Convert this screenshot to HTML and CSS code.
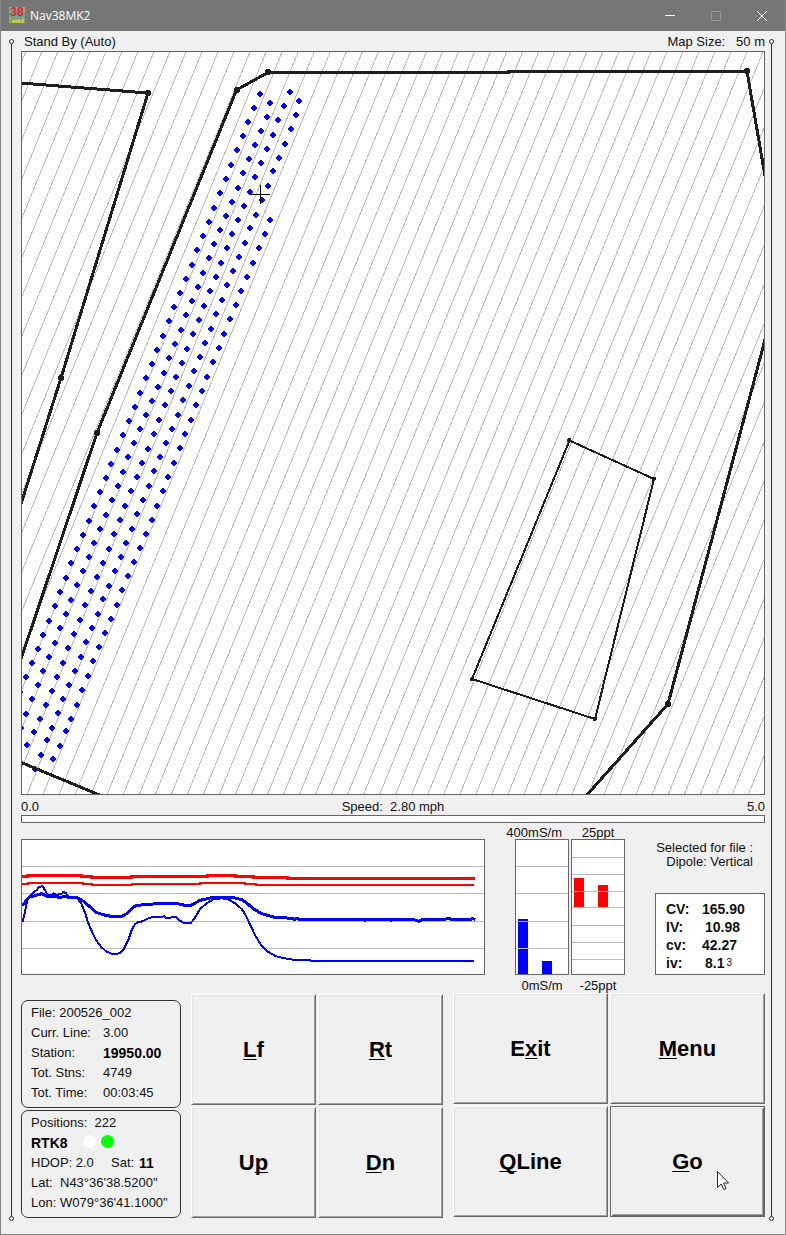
FILE: index.html
```html
<!DOCTYPE html>
<html lang="en">
<head>
<meta charset="utf-8">
<title>Nav38MK2</title>
<link rel="stylesheet" href="styles.css">
</head>
<body>
<div class="window">
  <header class="titlebar">
    <svg class="app-icon" viewBox="0 0 16 16" aria-hidden="true">
      <rect width="16" height="16" fill="#7d9c82"/>
      <path d="M0 1h5M7 1h3M12 1h4M0 4h2M14 4h2M1 10v6M14 6v5M3 15h3" stroke="#c8c23a" stroke-width="1"/>
      <path d="M0 7h3M8 2v3M5 0v2M0 13h3M9 9h6M12 3h3" stroke="#3fa3a8" stroke-width="1"/>
      <text x="8" y="9" class="icon-38">38</text>
      <text x="9" y="16" class="icon-mk">mk2</text>
    </svg>
    <h1 class="title">Nav38MK2</h1>
    <button class="win-btn" type="button" aria-label="Minimize"><svg viewBox="0 0 10 10"><path d="M0 4.500h10"/></svg></button>
    <button class="win-btn" type="button" aria-label="Maximize" disabled><svg viewBox="0 0 10 10"><path d="M.5.5h9v9h-9z"/></svg></button>
    <button class="win-btn" type="button" aria-label="Close"><svg viewBox="0 0 10 10"><path class="smooth" d="M0 0l10 10M10 0L0 10"/></svg></button>
  </header>

  <div class="client">
    <div class="rail rail-left"><i class="knob"></i><i class="track"></i><i class="knob"></i></div>

    <main class="content">
      <div class="map-head"><span>Stand By (Auto)</span><span>Map Size: &nbsp;&nbsp;50 m</span></div>

      <svg class="map" viewBox="22 52 742 742" role="img" aria-label="Survey map">
        <defs>
          <path id="swaths" d="M25.6 52l-303 742m319.03-742l-303 742m319.03-742l-303 742m319.03-742l-303 742m319.03-742l-303 742m319.03-742l-303 742m319.03-742l-303 742m319.03-742l-303 742m319.03-742l-303 742m319.03-742l-303 742m319.03-742l-303 742"/>
        </defs>
        <g class="swath-lines">
          <use href="#swaths"/><use href="#swaths" x="176.33"/><use href="#swaths" x="352.66"/>
          <use href="#swaths" x="528.99"/><use href="#swaths" x="705.32"/><use href="#swaths" x="881.65"/>
        </g>
        <g class="stations">
          <path d="M260 94h0M254 108h0M248 122h0M243 136h0M237 150h0M231 165h0M226 179h0M220 193h0M214 208h0M209 222h0M203 236h0M197 250h0M192 265h0M186 279h0M180 293h0M174 307h0M169 321h0M163 336h0M157 350h0M152 364h0M146 378h0M140 393h0M135 407h0M129 421h0M123 435h0M117 450h0M111 464h0M106 478h0M100 492h0M94 506h0M89 521h0M83 535h0M77 549h0M71 563h0M66 578h0M60 592h0M55 606h0M49 621h0M43 635h0M38 649h0M32 663h0M26 677h0M20 692h0"/>
          <path d="M270 103h0M267 117h0M261 131h0M255 145h0M249 159h0M243 173h0M238 188h0M232 202h0M226 216h0M220 230h0M214 244h0M209 258h0M203 273h0M198 287h0M192 301h0M186 315h0M181 330h0M175 344h0M169 358h0M164 373h0M158 387h0M152 401h0M146 415h0M140 429h0M134 443h0M128 457h0M123 472h0M118 486h0M112 500h0M106 515h0M100 529h0M94 543h0M89 557h0M83 571h0M77 585h0M71 600h0M66 614h0M60 628h0M55 643h0M49 657h0M43 671h0M38 685h0M32 699h0M26 714h0M21 728h0"/>
          <path d="M290 92h0M284 106h0M278 120h0M273 135h0M267 149h0M261 163h0M255 177h0M250 192h0M244 206h0M238 220h0M232 234h0M227 248h0M221 263h0M216 277h0M210 291h0M204 306h0M199 320h0M193 334h0M187 349h0M182 363h0M176 377h0M171 391h0M165 405h0M159 420h0M154 434h0M148 449h0M142 463h0M137 477h0M131 491h0M125 506h0M120 520h0M114 534h0M109 549h0M103 563h0M97 577h0M91 591h0M85 605h0M80 620h0M74 634h0M68 648h0M63 663h0M57 677h0M52 691h0M46 705h0M40 719h0M34 732h0M27 745h0"/>
          <path d="M299 101h0M296 115h0M291 129h0M285 144h0M279 158h0M273 171h0M268 186h0M262 200h0M256 215h0M250 228h0M245 243h0M239 257h0M233 271h0M227 285h0M222 300h0M216 314h0M211 329h0M205 343h0M200 357h0M194 371h0M189 386h0M183 400h0M178 415h0M172 429h0M166 443h0M160 457h0M154 471h0M149 486h0M143 500h0M137 514h0M132 529h0M126 543h0M121 557h0M115 571h0M109 586h0M103 599h0M98 614h0M92 628h0M86 642h0M81 657h0M75 671h0M69 685h0M63 699h0M58 713h0M52 728h0M47 740h0M41 755h0"/>
          <path d="M270 220h0M265 234h0M259 248h0M253 263h0M247 277h0M241 291h0M236 305h0M230 319h0M224 334h0M219 348h0M213 362h0M207 377h0M202 391h0M196 405h0M191 420h0M185 434h0M180 448h0M174 463h0M168 477h0M163 491h0M157 506h0M152 520h0M146 534h0M140 548h0M134 562h0M128 576h0M122 590h0M117 605h0M111 619h0M105 633h0M99 647h0M93 661h0M88 676h0M82 690h0M77 705h0M71 719h0M66 731h0M60 746h0M53 759h0M35 769h0"/>
        </g>
        <g class="boundary">
          <path d="M20 83L148 93L61 378L20 507"/>
          <path d="M20 662L97 433L236.500 90L268 72.500H508V71.500H747L765 176"/>
          <path d="M766 336L668 704L586 796"/>
          <path d="M20 762L102 796"/>
        </g>
        <path class="nodes" d="M148 93h0M61 378h0M97 433h0M237 90h0M268 72h0M747 71h0M668 704h0"/>
        <path class="plot" d="M569.500 440.500L654 479L595 719L472 679z"/>
        <path class="plot-nodes" d="M569 440h0M654 479h0M595 719h0M472 679h0"/>
        <path class="cross" d="M260.500 185v19M251 194.500h19"/>
      </svg>

      <div class="speed"><span>0.0</span><label for="speed">Speed: &nbsp;2.80 mph</label><span>5.0</span></div>
      <progress class="speed-bar" id="speed" value="0" max="5"></progress>

      <section class="readings">
        <svg class="chart" viewBox="66 150 1386 402" preserveAspectRatio="none" role="img" aria-label="Readings trace">
          <path class="grid" d="M66 229.500h1386M66 310.500h1386M66 394.500h1386M66 475.500h1386"/>
          <path class="red thick" d="M66 259.500H82V256.500H245V259.500H275V262.500H395V259.500H622V256.500H707V259.500H760V262.500H863V265.500H1426"/>
          <path class="red thin" d="M66 282H85V279H248V282H277V285H397V282H601V279H734V282H769V285H1423"/>
          <path class="blue thick" d="M66 348L87 322L105 317L125 311L140 319L160 320L180 322L195 320L210 322L235 324L252 335L290 368L320 377L345 380L365 379L382 370L400 351L410 346L450 343L490 339L505 341L525 339L545 344L560 347L575 345L600 331L635 323L700 323L725 329L740 339L760 356L785 371L820 381L875 385L884 388L890 385L898 388H1090L1095 391L1100 388H1168L1173 391L1178 388H1240L1256 394L1268 388H1335L1345 385L1355 388H1412L1418 385L1426 389"/>
          <path class="blue thin" d="M68 395L75 365L82 330L97 310L110 300L118 290L128 289L135 300L142 315L155 315L160 310L168 314L184 313L190 306L197 309L205 320L232 325L245 343L255 368L265 400L278 430L290 453L303 470L318 484L335 491L350 492L362 488L372 476L385 450L395 420L405 402L415 396L428 394L440 387L455 382L487 381L491 378L497 383L510 384L515 381L527 381L540 392L552 399L572 399L582 388L600 357L620 340L640 328L665 325L685 328L705 340L725 357L735 372L750 403L765 435L785 468L800 483L828 499L860 506L885 510L930 511L935 513H1423"/>
        </svg>

        <div class="gauges">
          <div class="gauge">
            <span class="gauge-top wide">400mS/m</span>
            <svg class="gauge-box" viewBox="0 0 52 134" preserveAspectRatio="none" role="img" aria-label="Conductivity">
              <path fill="#00f" d="M2 79h10v55H2zM26 121h10v13H26z"/>
              <path class="rule" d="M0 26.500h52M0 53.500h52M0 81.500h52M0 108.500h52"/>
            </svg>
            <span class="gauge-bottom">0mS/m</span>
          </div>
          <div class="gauge">
            <span class="gauge-top">25ppt</span>
            <svg class="gauge-box" viewBox="0 0 52 134" preserveAspectRatio="none" role="img" aria-label="In-phase">
              <path fill="#f00" d="M2 38h10v29H2zM26 45h10v22H26z"/>
              <path class="rule" d="M0 17.500h52M0 34.500h52M0 51.500h52M0 67.500h52M0 85.500h52M0 102.500h52M0 119.500h52"/>
            </svg>
            <span class="gauge-bottom">-25ppt</span>
          </div>
        </div>

        <div class="side">
          <p class="selected">Selected for file :<br>Dipole: Vertical</p>
          <dl class="values">
            <dt>CV:</dt><dd>165.90</dd>
            <dt>IV:</dt><dd class="indent">10.98</dd>
            <dt>cv:</dt><dd>42.27</dd>
            <dt>iv:</dt><dd class="indent">8.1<span class="residue">3</span></dd>
          </dl>
        </div>
      </section>

      <section class="bottom">
        <div class="panels">
          <div class="panel">
            <p>File: 200526_002</p>
            <p><span class="key">Curr. Line:</span>3.00</p>
            <p><span class="key">Station:</span><b>19950.00</b></p>
            <p><span class="key">Tot. Stns:</span>4749</p>
            <p><span class="key">Tot. Time:</span>00:03:45</p>
          </div>
          <div class="panel">
            <p>Positions: &nbsp;222</p>
            <p><b class="fix">RTK8</b><i class="lamp"></i><i class="lamp on"></i></p>
            <p><span class="hdop">HDOP: 2.0</span><span class="sat">Sat:</span><b>11</b></p>
            <p><span class="axis">Lat:</span>N43°36'38.5200"</p>
            <p><span class="axis">Lon:</span>W079°36'41.1000"</p>
          </div>
        </div>
        <div class="keys">
          <button class="key-btn" type="button"><span><u>L</u>f</span></button>
          <button class="key-btn" type="button"><span><u>R</u>t</span></button>
          <button class="key-btn" type="button"><span>U<u>p</u></span></button>
          <button class="key-btn" type="button"><span><u>D</u>n</span></button>
        </div>
        <div class="keys actions">
          <button class="key-btn" type="button"><span>E<u>x</u>it</span></button>
          <button class="key-btn" type="button"><span><u>M</u>enu</span></button>
          <button class="key-btn" type="button"><span><u>Q</u>Line</span></button>
          <button class="key-btn default" type="button"><span><u>G</u>o</span>
            <svg class="cursor" viewBox="0 0 12 19" aria-hidden="true"><path d="M.5.500v16l3.700-3.500 2.500 5.500 2.300-1-2.400-5.500h5z" fill="#fff" stroke="#223" stroke-width="1"/></svg>
          </button>
        </div>
      </section>
    </main>

    <div class="rail rail-right"><i class="knob"></i><i class="track"></i><i class="knob"></i></div>
  </div>
</div>
</body>
</html>
```
FILE: styles.css
```css
* { box-sizing: border-box; }

body {
  margin: 0;
  background: #f0f0f0;
  color: #111;
  font: 13px/20px "Liberation Sans", Arial, sans-serif;
}

p, dl, dd, h1 { margin: 0; }

.window {
  display: flex;
  flex-direction: column;
  min-height: 100vh;
  border: 1px solid #868686;
  border-top: 0;
}

.titlebar {
  display: flex;
  align-items: center;
  height: 31px;
  padding-left: 8px;
  background: #767676;
  color: #fff;
}

.app-icon { width: 16px; height: 16px; margin-bottom: 2px; overflow: visible; }
.icon-38 { font: bold 12px "Liberation Sans", sans-serif; fill: #e0243c; text-anchor: middle; }
.icon-mk { font: bold 6px "Liberation Sans", sans-serif; fill: #f0e818; text-anchor: middle; }

.title {
  flex: 1;
  padding-left: 5px;
  font: 12px/20px "Open Sans", "Noto Sans", sans-serif;
}

.win-btn {
  display: flex;
  align-items: center;
  justify-content: center;
  width: 46px;
  height: 31px;
  padding: 0;
  border: 0;
  background: none;
}
.win-btn svg { width: 10px; height: 10px; overflow: visible; }
.win-btn path { fill: none; stroke: #fff; shape-rendering: crispEdges; }
.win-btn path.smooth { shape-rendering: auto; }
.win-btn:disabled path { stroke: #949494; }

.client { display: flex; flex: 1; }

.rail {
  display: flex;
  flex-direction: column;
  align-items: center;
  flex: none;
  width: 20px;
  padding: 8px 0 13px;
}
.rail-left { padding-left: 8px; padding-right: 7px; }
.rail-right { padding-left: 4px; padding-right: 11px; }
.knob { width: 5px; height: 5px; border: 1px solid #222; border-radius: 50%; background: #fff; }
.track { flex: 1; width: 1px; background: #333; }

.content { flex: 1; min-width: 0; padding-bottom: 16px; }

.map-head { display: flex; justify-content: space-between; padding: 2px 0 0 3px; line-height: 18px; }

.map {
  display: block;
  width: 100%;
  border: 1px solid #646464;
  background: #fff;
  shape-rendering: crispEdges;
}
.map path { fill: none; }
.swath-lines { stroke: #bdbdbd; stroke-width: 1; }
.stations { stroke: #00f; stroke-width: 5.6; stroke-linecap: round; }
.boundary { stroke: #1e1e1e; stroke-width: 3; }
.nodes { stroke: #1e1e1e; stroke-width: 6; stroke-linecap: round; }
.plot { stroke: #1e1e1e; stroke-width: 2; }
.plot-nodes { stroke: #1e1e1e; stroke-width: 4; stroke-linecap: round; }
.cross { stroke: #000; stroke-width: 1; }

.speed { display: flex; justify-content: space-between; padding-top: 4px; line-height: 16px; }

.speed-bar {
  display: block;
  width: 100%;
  height: 8px;
  border: 1px solid #646464;
  background: #fff;
  appearance: none;
}
.speed-bar::-webkit-progress-bar { background: #fff; }
.speed-bar::-webkit-progress-value { background: #00f; }

.readings { display: flex; gap: 30px; }

.chart {
  flex: 1;
  min-width: 0;
  height: 136px;
  margin-top: 16px;
  border: 1px solid #646464;
  background: #fff;
  shape-rendering: crispEdges;
}
.chart path { fill: none; }
.grid, .rule { stroke: #bdbdbd; }
.grid { stroke-width: 3; }
.red { stroke: #f00; }
.blue { stroke: #00f; }
.thick { stroke-width: 9; }
.thin { stroke-width: 6; }

.gauges { display: flex; gap: 2px; }
.gauge { display: flex; flex-direction: column; width: 54px; line-height: 16px; }
.gauge-top, .gauge-bottom { display: flex; justify-content: center; white-space: nowrap; }
.gauge-top { height: 16px; padding-top: 2px; }
.gauge-top.wide { justify-content: flex-end; padding-right: 7px; }
.gauge-bottom { height: 18px; padding-top: 3px; }
.gauge-box {
  width: 54px;
  height: 136px;
  border: 1px solid #646464;
  background: #fff;
  shape-rendering: crispEdges;
}

.side {
  display: flex;
  flex-direction: column;
  justify-content: space-between;
  width: 110px;
  margin-bottom: 18px;
  padding-top: 18px;
}
.selected { padding-right: 12px; text-align: right; line-height: 14px; white-space: nowrap; }
.values {
  display: grid;
  grid-template-columns: 36px 1fr;
  grid-auto-rows: 18px;
  padding: 6px 0 2px 10px;
  border: 1px solid #646464;
  background: #fff;
  font-weight: bold;
  font-size: 14px;
  line-height: 18px;
}
.values .indent { display: flex; padding-left: 3px; }
.residue { margin-left: 2px; font-size: 10px; font-weight: normal; }

.bottom {
  display: grid;
  grid-template-columns: 160px 252fr 312fr;
  gap: 10px;
  align-items: end;
}

.panels { display: grid; gap: 2px; }
.panel {
  height: 108px;
  padding: 2px 0 0 9px;
  border: 1px solid #333;
  border-radius: 7px;
  white-space: nowrap;
}
.panel p { display: flex; align-items: center; height: 20px; }
.panel b { font-size: 14px; color: #000; }
.key { width: 72px; }
.fix { width: 52px; }
.lamp { width: 13px; height: 13px; margin: 0 5px 3px 0; border-radius: 50%; background: #fff; }
.lamp.on { background: #0f0; }
.hdop { width: 80px; }
.sat { width: 28px; }
.axis { width: 29px; }

.keys { display: grid; grid-template-columns: 1fr 1fr; gap: 2px; }
.actions { margin-bottom: 1px; }

.key-btn {
  position: relative;
  height: 111px;
  padding: 0;
  border: 1px solid;
  border-color: #fff #696969 #696969 #fff;
  background: #f0f0f0;
  box-shadow: inset 1px 1px #e3e3e3, inset -1px -1px #a0a0a0;
  color: #000;
  font: bold 22px/26px "Liberation Sans", Arial, sans-serif;
}
.key-btn u { text-decoration-thickness: 1px; text-underline-offset: 2px; text-decoration-skip-ink: none; }
.key-btn.default {
  border-color: #646464;
  box-shadow: inset 1px 1px #fff, inset -1px -1px #696969, inset 2px 2px #e3e3e3, inset -2px -2px #a0a0a0;
}
.cursor { position: absolute; left: 106px; top: 64px; width: 12px; height: 19px; overflow: visible; }
```
